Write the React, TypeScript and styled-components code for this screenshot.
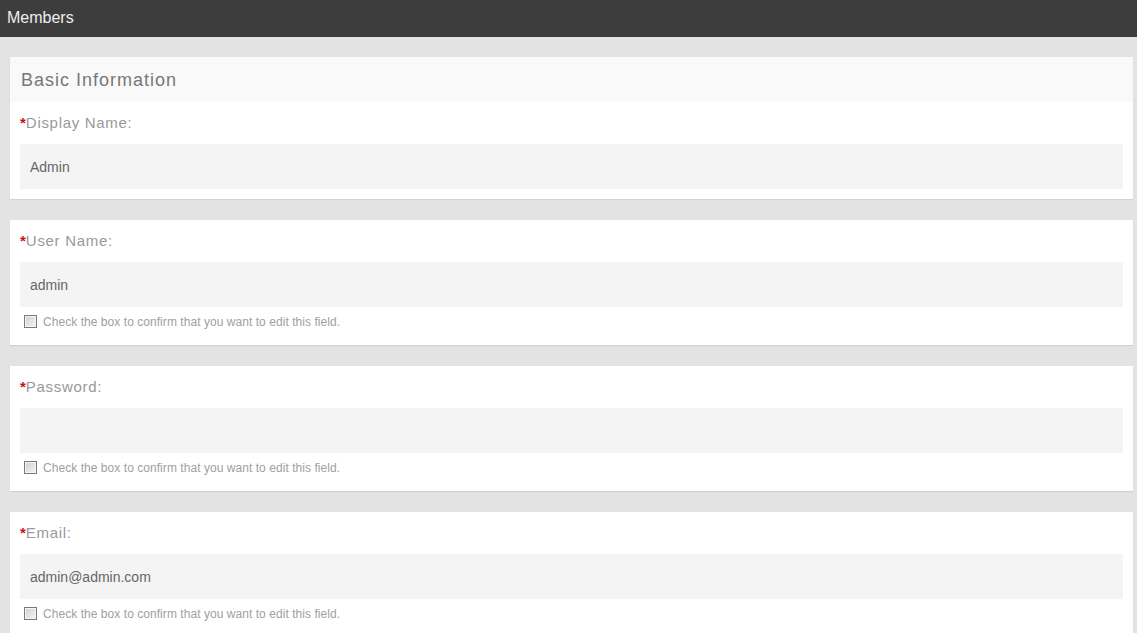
import React from 'react';
import styled, { createGlobalStyle } from 'styled-components';

const GlobalStyle = createGlobalStyle`
  html, body {
    margin: 0;
    padding: 0;
    background: #e3e3e3;
    font-family: "Liberation Sans", Arial, sans-serif;
  }
`;

const TopBar = styled.div`
  height: 37px;
  background: #3d3d3d;
  color: #eeeeee;
  font-size: 16px;
  line-height: 35px;
  padding-left: 7px;
`;

const Content = styled.div`
  display: flex;
  flex-direction: column;
  gap: 21px;
  padding: 20px 4px 20px 10px;
`;

const Card = styled.div`
  background: #fff;
  box-shadow: 0 1px 1px rgba(0, 0, 0, 0.08);
  padding: 0 10px 10px;
`;

const CardHeader = styled.div`
  margin: 0 -10px;
  height: 45px;
  background: #f9f9f9;
  color: #777;
  font-size: 18px;
  letter-spacing: 1px;
  line-height: 46px;
  padding-left: 11px;
`;

const Label = styled.div`
  height: 42px;
  line-height: 42px;
  font-size: 15px;
  letter-spacing: 0.7px;
  color: #999;

  b {
    color: #c4161c;
    font-weight: bold;
    letter-spacing: 0;
  }
`;

const Field = styled.input`
  box-sizing: border-box;
  display: block;
  width: 100%;
  height: 45px;
  border: none;
  outline: none;
  background: #f4f4f4;
  padding: 0 10px;
  font-family: inherit;
  font-size: 14px;
  color: #666;
`;

const ConfirmRow = styled.label`
  display: flex;
  align-items: center;
  gap: 6px;
  height: 28px;
  padding: 2px 0 0 4px;
  box-sizing: border-box;
  font-size: 12px;
  letter-spacing: 0.05px;
  color: #a0a0a0;
`;

const Box = styled.input`
  appearance: none;
  margin: 0 0 1px;
  width: 13px;
  height: 13px;
  border: 1px solid #7a7a7a;
  background: linear-gradient(135deg, #cfcfcf, #f6f6f6);
  box-shadow: inset 0 0 0 1px #f4f4f4;
  box-sizing: border-box;
`;

interface FieldProps {
  label: string;
  value: string;
  type?: string;
  confirm?: boolean;
}

function FormField({ label, value, type = 'text', confirm }: FieldProps) {
  return (
    <>
      <Label><b>*</b>{label}</Label>
      <Field type={type} defaultValue={value} />
      {confirm && (
        <ConfirmRow>
          <Box type="checkbox" />
          Check the box to confirm that you want to edit this field.
        </ConfirmRow>
      )}
    </>
  );
}

export default function App() {
  return (
    <>
      <GlobalStyle />
      <TopBar>Members</TopBar>
      <Content>
        <Card>
          <CardHeader>Basic Information</CardHeader>
          <FormField label="Display Name:" value="Admin" />
        </Card>
        <Card>
          <FormField label="User Name:" value="admin" confirm />
        </Card>
        <Card>
          <FormField label="Password:" value="" type="password" confirm />
        </Card>
        <Card>
          <FormField label="Email:" value="admin@admin.com" confirm />
        </Card>
      </Content>
    </>
  );
}
